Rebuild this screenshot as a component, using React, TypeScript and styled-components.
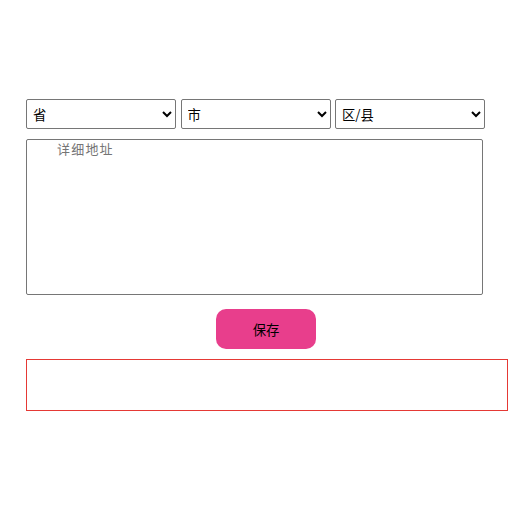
import React from "react";
import styled, { createGlobalStyle } from "styled-components";

const Global = createGlobalStyle`
  body {
    margin: 8px;
    background: #fff;
    font-family: "Noto Sans CJK SC", "Liberation Sans", sans-serif;
  }
`;

const Page = styled.div`
  width: 482px;
  margin-left: 18px;
  padding-top: 91px;
  display: flex;
  flex-direction: column;
`;

const SelectRow = styled.div`
  display: flex;
  gap: 4.5px;
  height: 30px;
`;

const Select = styled.select`
  width: 150px;
  height: 30px;
  font-size: 13.33px;
  font-family: "Noto Sans CJK SC", "Liberation Sans", sans-serif;
  color: #000;
  background: #fff;
  border: 1px solid #767676;
  border-radius: 2px;
  padding: 0 2px;
`;

const Address = styled.textarea`
  box-sizing: border-box;
  margin-top: 10px;
  width: 457px;
  height: 156px;
  border: 1px solid #767676;
  border-radius: 2px;
  padding: 0 4px 0 30px;
  font-size: 13px;
  line-height: 18px;
  letter-spacing: 1.2px;
  font-family: "Noto Sans CJK SC", "Liberation Sans", sans-serif;
  resize: none;
  &::placeholder {
    color: #757575;
  }
`;

const SaveButton = styled.button`
  align-self: flex-start;
  margin: 14px 0 0 190px;
  width: 100px;
  height: 40px;
  border: none;
  border-radius: 10px;
  background: #e83e8c;
  color: #000;
  font-size: 13.33px;
  font-family: "Noto Sans CJK SC", "Liberation Sans", sans-serif;
`;

const Result = styled.div`
  box-sizing: border-box;
  margin-top: 10px;
  width: 482px;
  height: 52px;
  border: 1px solid #e53935;
`;

export default function App() {
  return (
    <>
      <Global />
      <Page>
        <SelectRow>
          <Select defaultValue="">
            <option value="">省</option>
          </Select>
          <Select defaultValue="">
            <option value="">市</option>
          </Select>
          <Select defaultValue="">
            <option value="">区/县</option>
          </Select>
        </SelectRow>
        <Address placeholder="详细地址" />
        <SaveButton>保存</SaveButton>
        <Result />
      </Page>
    </>
  );
}
